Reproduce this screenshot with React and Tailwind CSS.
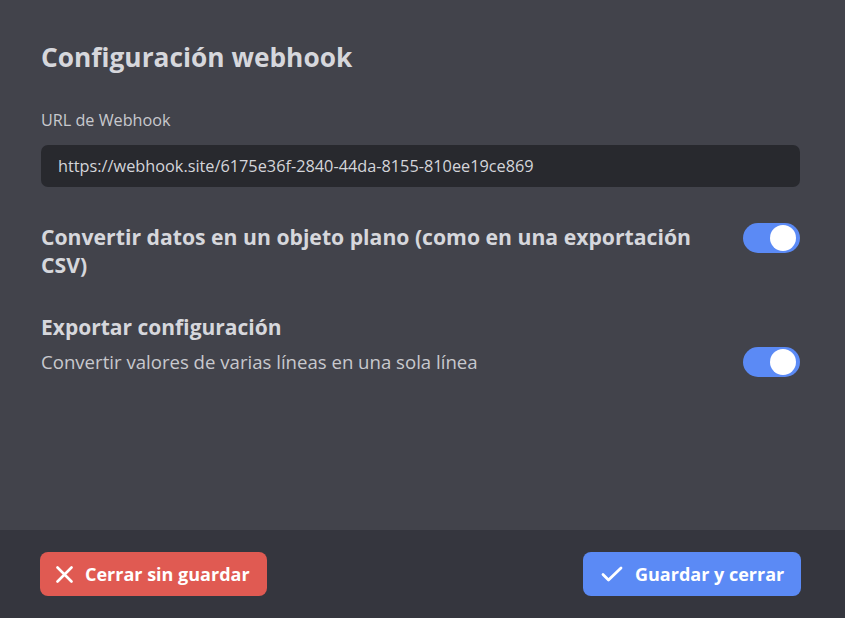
import React from "react";

function Toggle() {
  return (
    <div className="w-[57px] h-[30px] rounded-full bg-[#5b8af5] flex items-center justify-end pr-[4px] shrink-0">
      <div className="w-[26px] h-[26px] rounded-full bg-white" />
    </div>
  );
}

export default function App() {
  return (
    <div className="w-[845px] h-[618px] flex flex-col bg-[#42434b] text-[#d4d5da]" style={{ fontFamily: "'Open Sans', Lato, sans-serif" }}>
      <div className="flex-1 pl-[41px] pr-[45px] pt-[39px]">
        <h1 className="text-[26.3px] leading-[36px] font-bold text-[#d6d7dc]">Configuración webhook</h1>
        <div className="mt-[35px] text-[16.2px] leading-[20px] text-[#c8c9ce]">URL de Webhook</div>
        <div className="mt-[15px] h-[42px] rounded-[7px] bg-[#28292e] flex items-center px-[17px] text-[16.3px] text-[#d4d5da]">
          https://webhook.site/6175e36f-2840-44da-8155-810ee19ce869
        </div>
        <div className="mt-[36px] flex items-start justify-between">
          <div className="w-[680px] text-[21.2px] leading-[28px] font-bold text-[#d6d7dc]">
            Convertir datos en un objeto plano (como en una exportación CSV)
          </div>
          <Toggle />
        </div>
        <div className="mt-[34px] text-[21px] leading-[28px] font-bold text-[#d6d7dc]">Exportar configuración</div>
        <div className="mt-[6px] flex items-center justify-between">
          <div className="text-[18.6px] leading-[24px] text-[#c8c9ce]">Convertir valores de varias líneas en una sola línea</div>
          <Toggle />
        </div>
      </div>
      <div className="h-[88px] bg-[#35363e] flex items-center justify-between pl-[40px] pr-[44px]">
        <button className="h-[44px] w-[227px] rounded-[8px] bg-[#e05a52] text-white font-bold text-[18px] flex items-center pl-[16px] gap-[12px]">
          <svg width="17" height="17" viewBox="0 0 17 17" fill="none" stroke="white" strokeWidth="2.6" strokeLinecap="round">
            <path d="M1.5 1.5L15.5 15.5M15.5 1.5L1.5 15.5" />
          </svg>
          Cerrar sin guardar
        </button>
        <button className="h-[44px] w-[218px] rounded-[8px] bg-[#5b8af5] text-white font-bold text-[18px] flex items-center pl-[18px] gap-[12px]">
          <svg width="22" height="16" viewBox="0 0 22 16" fill="none" stroke="white" strokeWidth="2.8" strokeLinecap="round" strokeLinejoin="round">
            <path d="M2 8.5L7.5 14L20 2" />
          </svg>
          Guardar y cerrar
        </button>
      </div>
    </div>
  );
}
